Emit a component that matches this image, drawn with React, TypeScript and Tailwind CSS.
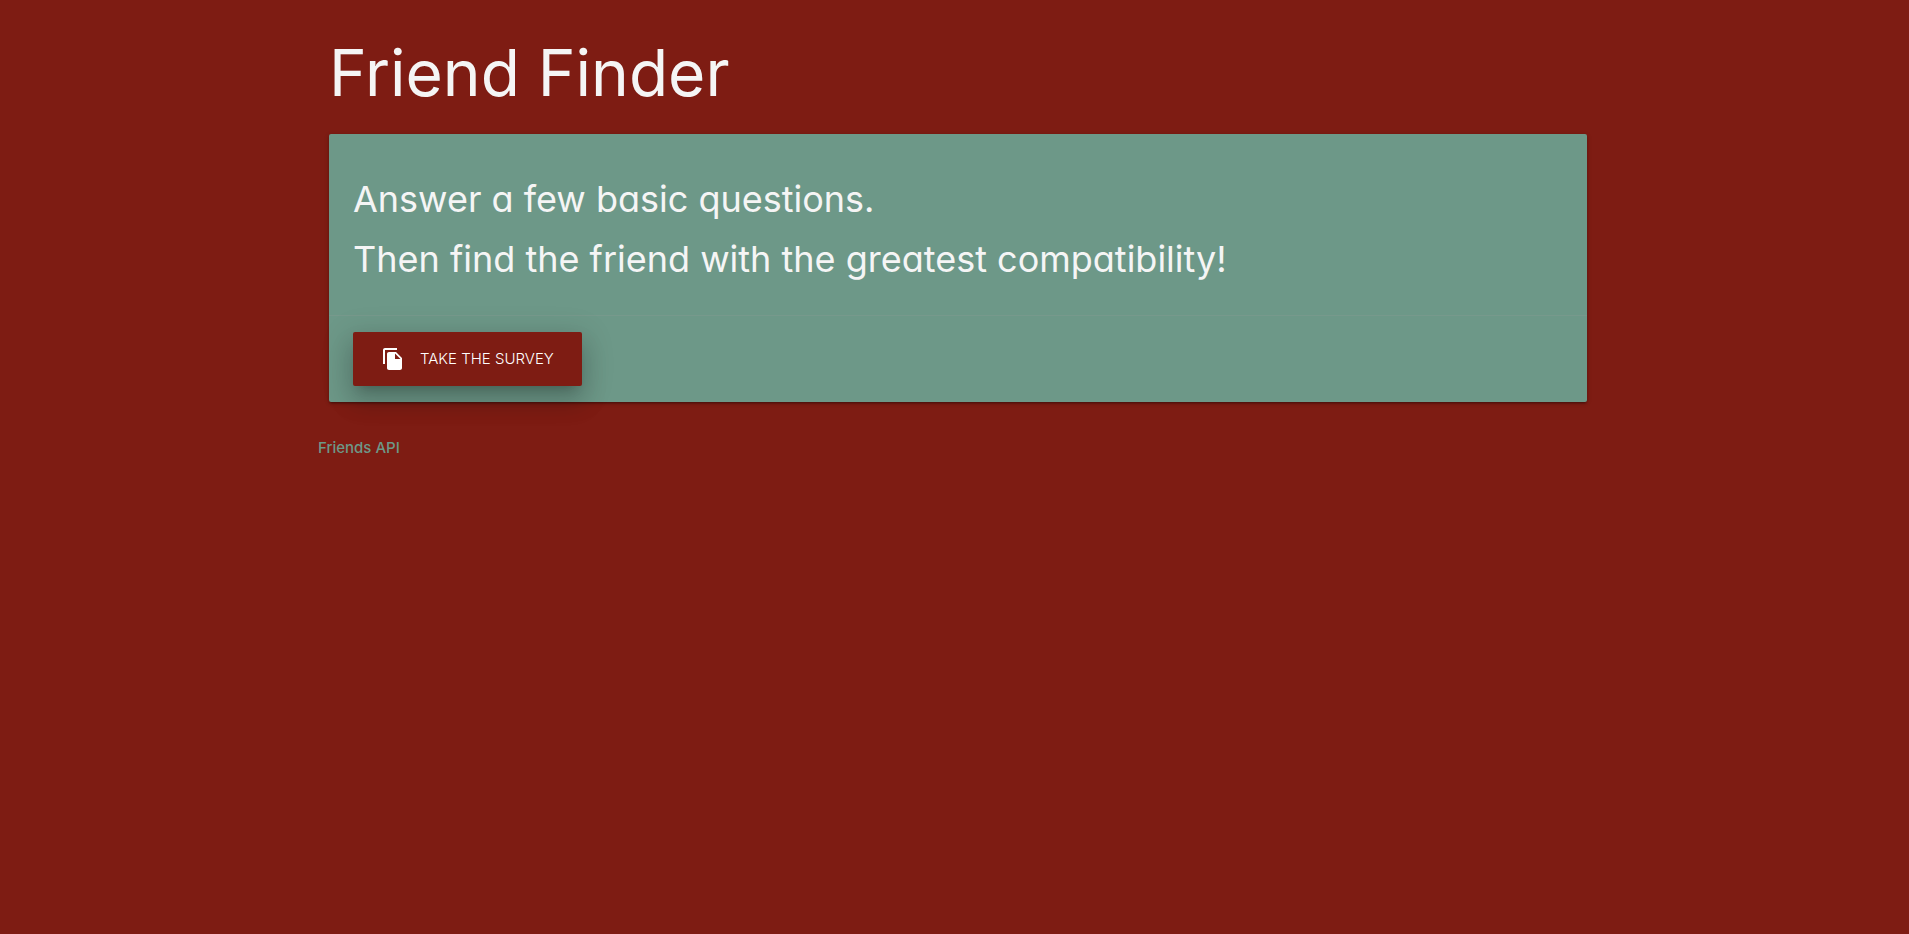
import { MdFileCopy } from "react-icons/md";

export default function App() {
  return (
    <div className="min-h-screen bg-[#7e1c13] pl-[7px] font-[Inter,sans-serif] text-[#f5f5f5] [font-feature-settings:'cv11']">
      <main className="mx-auto max-w-[1280px]">
        <div className="px-[11px]">
          <h1 className="pt-[37px] text-[64px] leading-[72px] font-normal">Friend Finder</h1>
          <section className="mt-[25px] rounded-xs bg-[#6d9888] shadow-[0_2px_2px_0_rgba(0,0,0,0.14),0_3px_1px_-2px_rgba(0,0,0,0.12),0_1px_5px_0_rgba(0,0,0,0.2)]">
            <div className="px-6 pt-[35px] pb-[26px] text-[36px] leading-[60px] font-[380]">
              <p>Answer a few basic questions.</p>
              <p>Then find the friend with the greatest compatibility!</p>
            </div>
            <div className="border-t border-[rgba(160,160,160,0.2)] px-6 py-4">
              <button
                type="button"
                className="flex h-[54px] items-center gap-[15px] rounded-xs bg-[#7e1c13] px-7 text-[15px] font-[350] text-white shadow-[0_16px_24px_2px_rgba(0,0,0,0.14),0_6px_30px_5px_rgba(0,0,0,0.12),0_8px_10px_-7px_rgba(0,0,0,0.2)]"
              >
                <MdFileCopy size={24} aria-hidden="true" />
                TAKE THE SURVEY
              </button>
            </div>
          </section>
        </div>
        <footer className="pt-[33px]">
          <a href="#friends" className="text-[15px] leading-6 font-medium text-[#6d9888]">
            Friends API
          </a>
        </footer>
      </main>
    </div>
  );
}
